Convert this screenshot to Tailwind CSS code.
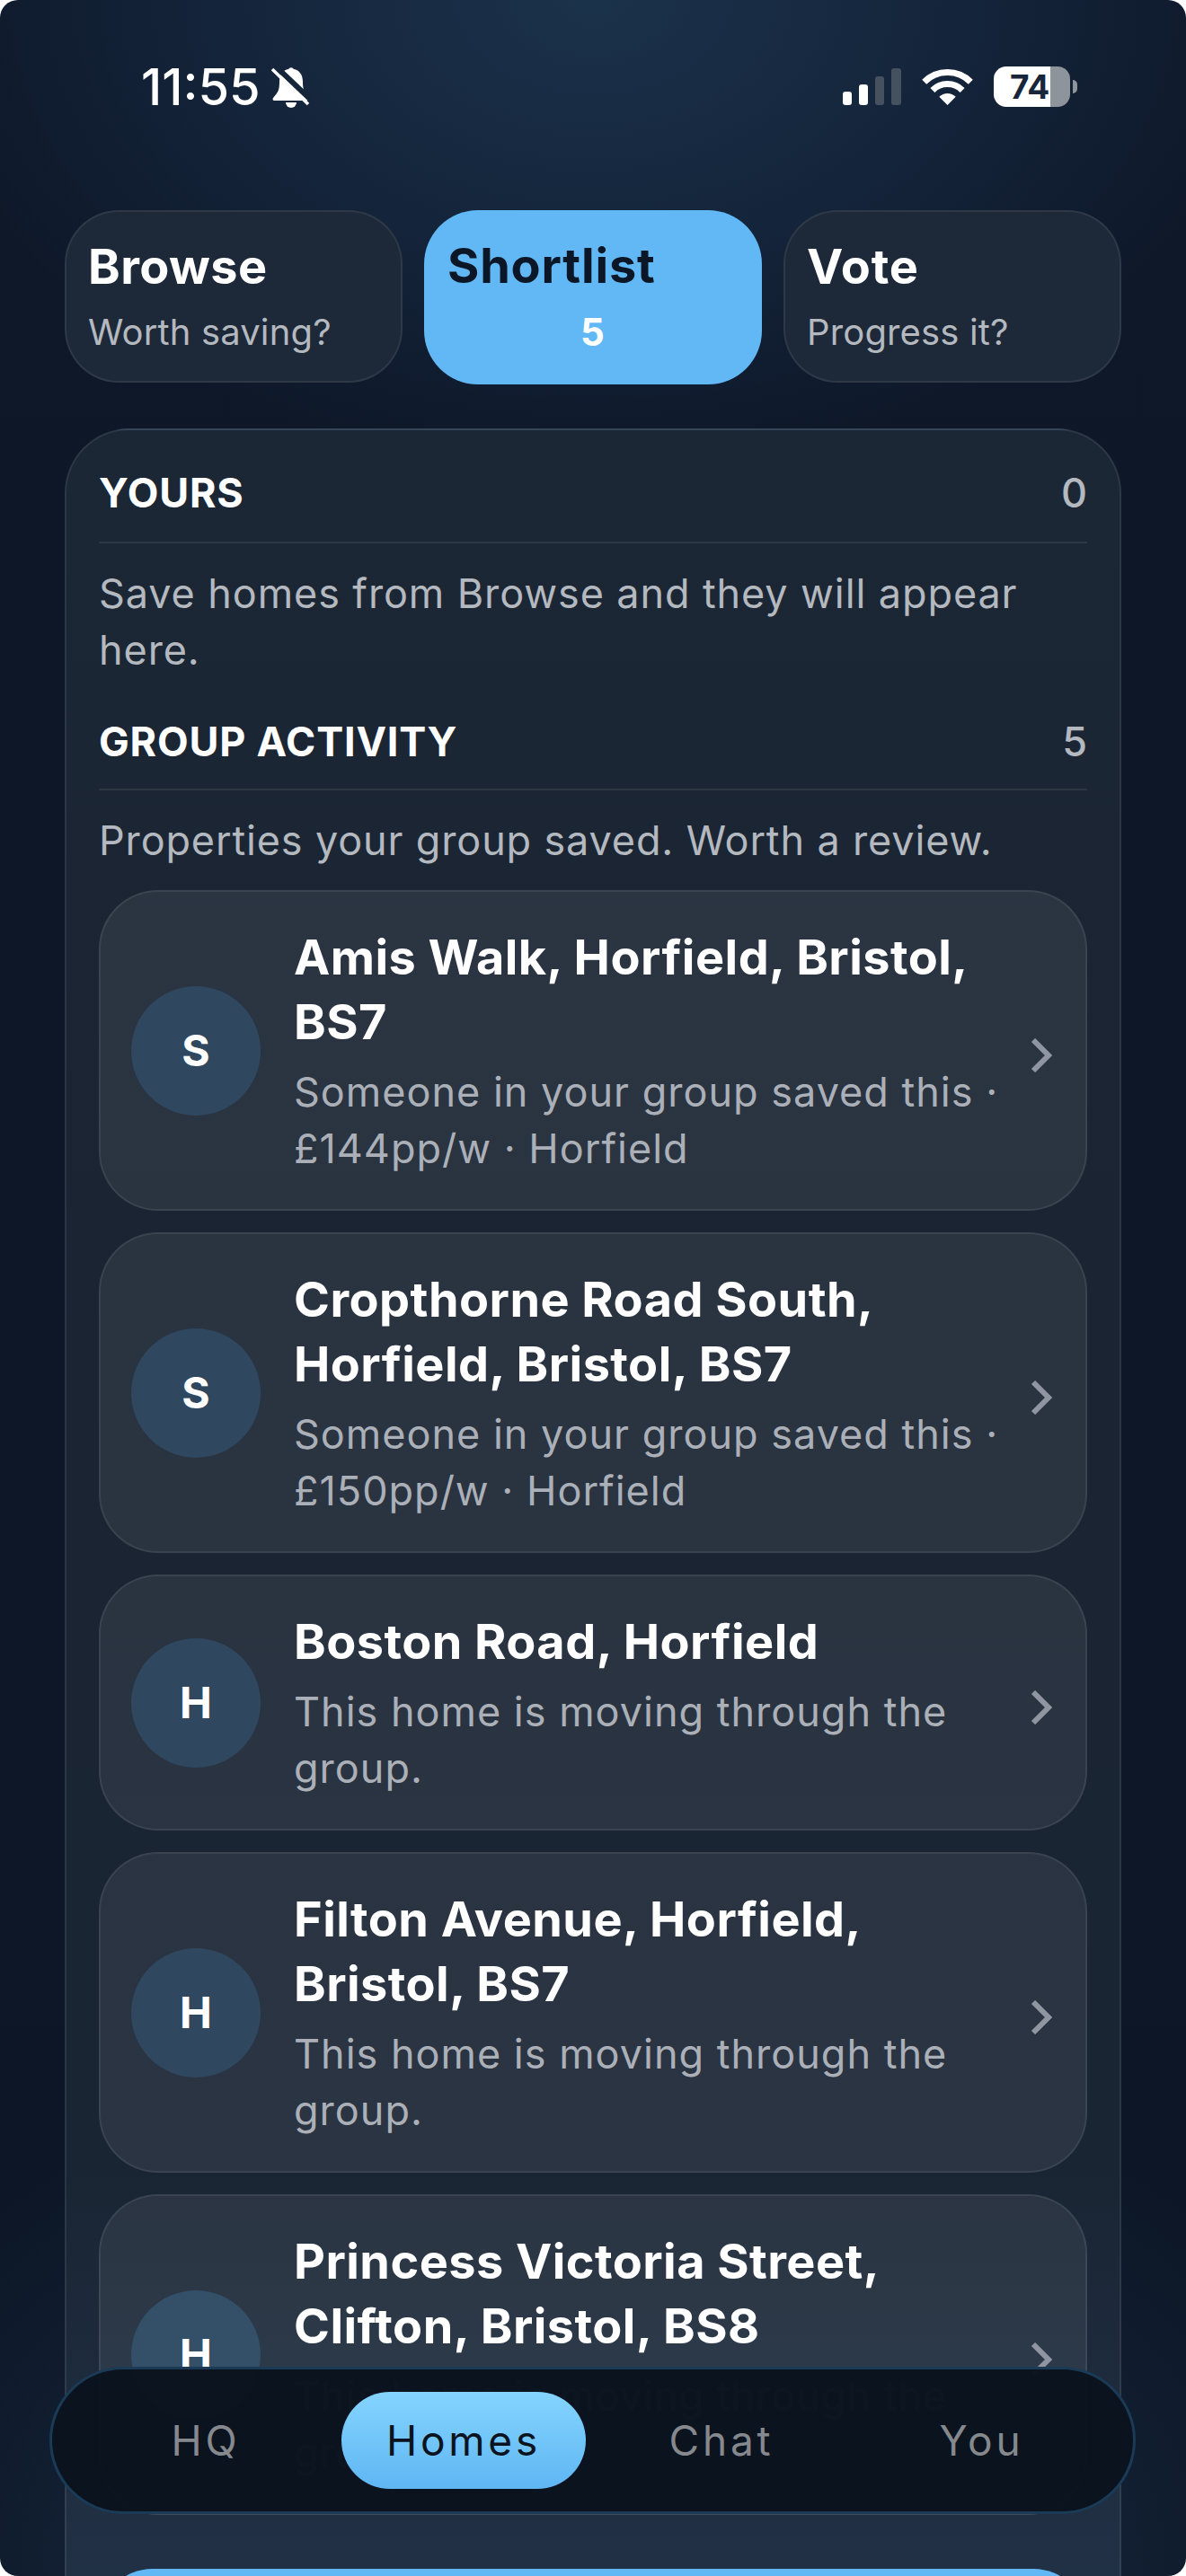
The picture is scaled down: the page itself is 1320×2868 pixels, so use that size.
<!DOCTYPE html>
<html lang="en">

<head>
  <meta charset="UTF-8">
  <meta name="viewport" content="width=device-width, initial-scale=1.0">
  <title>Homes: Shortlist</title>
  <script src="https://cdn.jsdelivr.net/npm/@tailwindcss/browser@4"></script>
</head>

<body class="bg-white font-['Inter',sans-serif]">
  <div class="relative h-[2868px] w-[1320px] overflow-hidden rounded-[20px] bg-[radial-gradient(ellipse_760px_520px_at_50%_0%,#1b324b_0%,#14243a_55%,transparent_100%),radial-gradient(ellipse_900px_600px_at_50%_100%,#1c3048_0%,transparent_100%),linear-gradient(#0e1829,#0c1626)]">

    <!-- Status bar -->
    <div class="flex h-[234px] items-start justify-between pl-[157px] pr-[121px] pt-[74px] text-white">
      <div class="flex items-center gap-[12px]">
        <span class="text-[56px] font-medium leading-[46px]">11:55</span>
        <svg width="44" height="46" viewBox="0 0 44 46" fill="#fff">
          <path d="M19 3a3.5 3.5 0 0 1 6 0c6 1 10 6 10 14c0 7 1 10 3 13l4 5c1 2 0 3-2 3H4c-2 0-3-1-2-3l4-5c2-3 3-6 3-13c0-8 4-13 10-14z" />
          <path d="M16 40h12a6 6 0 0 1-12 0z" />
          <path d="M5 0L45 38" stroke="#16263a" stroke-width="6" />
          <path d="M1 3L41 42" stroke="#fff" stroke-width="3.5" />
        </svg>
      </div>
      <div class="flex items-start">
        <div class="mt-[2px] flex h-[41px] items-end gap-[8px]">
          <span class="h-[15px] w-[10px] rounded-[3px] bg-white"></span>
          <span class="h-[23px] w-[10px] rounded-[3px] bg-white"></span>
          <span class="h-[32px] w-[10px] rounded-[3px] bg-[#46515f]"></span>
          <span class="h-[41px] w-[11px] rounded-[3px] bg-[#46515f]"></span>
        </div>
        <svg class="ml-[23px] mt-[1px]" width="57" height="43" viewBox="0 0 57 43" fill="none" stroke="#fff" stroke-width="7">
          <path d="M2.7 16.2A36.5 36.5 0 0 1 54.3 16.2" />
          <path d="M11.9 25.4A23.5 23.5 0 0 1 45.1 25.4" />
          <path d="M28.5 42L19.3 32.8A13 13 0 0 1 37.7 32.8Z" fill="#fff" stroke="none" />
        </svg>
        <div class="relative ml-[23px] flex h-[45px] w-[85px] overflow-hidden rounded-[14px]">
          <span class="w-[63px] bg-white"></span>
          <span class="flex-1 bg-[#8d949c]"></span>
          <span class="absolute left-[18px] top-0 text-[37px] font-bold leading-[45px] text-[#17263a]">74</span>
        </div>
        <span class="ml-[3px] mt-[15px] h-[15px] w-[5px] rounded-r-full bg-[#8d949c]"></span>
      </div>
    </div>

    <!-- Tabs -->
    <div class="grid grid-cols-3 items-start gap-[24px] px-[72px]">
      <div class="h-[192px] rounded-[60px] border-[2px] border-white/8 bg-[#1d2838] pl-[24px] pt-[25px]">
        <div class="text-[54px] font-bold leading-[72px] tracking-[0.4px] text-white">Browse</div>
        <div class="mt-[5px] text-[40px] leading-[63px] tracking-[0.15px] text-[#b4b8bf]">Worth saving?</div>
      </div>
      <div class="h-[194px] rounded-[60px] bg-[#62b8f4] pl-[26px] pr-[27px] pt-[26px]">
        <div class="text-[54px] font-bold leading-[72px] tracking-[0.8px] text-[#0b1726]">Shortlist</div>
        <div class="mt-[6px] text-center text-[42px] font-bold leading-[63px] text-white">5</div>
      </div>
      <div class="h-[192px] rounded-[60px] border-[2px] border-white/8 bg-[#1d2838] pl-[24px] pt-[25px]">
        <div class="text-[54px] font-bold leading-[72px] tracking-[0.8px] text-white">Vote</div>
        <div class="mt-[5px] text-[40px] leading-[63px] tracking-[0.15px] text-[#b4b8bf]">Progress it?</div>
      </div>
    </div>

    <!-- Panel -->
    <div class="mx-[72px] mt-[49px] rounded-[72px] border-[2px] border-white/8 bg-[linear-gradient(180deg,#1c2736_0%,#1a2432_35%,#1a2534_75%,#24364c_100%)] px-[36px] pb-[60px] pt-[34px]">
      <div class="flex items-center justify-between border-b-[2px] border-white/8 pb-[18px]">
        <h2 class="text-[45px] font-bold leading-[72px] tracking-[0.8px] text-white">YOURS</h2>
        <span class="text-[45px] font-medium leading-[72px] text-[#b4b8bf]">0</span>
      </div>
      <p class="mt-[24px] text-[45px] leading-[63px] tracking-[0.9px] text-[#b4b8bf]">Save homes from Browse and they will appear here.</p>

      <div class="mt-[35px] flex items-center justify-between border-b-[2px] border-white/8 pb-[16px]">
        <h2 class="text-[45px] font-bold leading-[72px] tracking-[0.8px] text-white">GROUP ACTIVITY</h2>
        <span class="text-[45px] font-medium leading-[72px] text-[#b4b8bf]">5</span>
      </div>
      <p class="mt-[24px] text-[45px] leading-[63px] tracking-[0.85px] text-[#b4b8bf]">Properties your group saved. Worth a review.</p>

      <div class="mt-[24px] flex flex-col gap-[24px]">
        <div class="flex items-center rounded-[66px] border-[2px] border-white/8 bg-white/7 px-[34px] pb-[36px] pt-[37px]">
          <div class="flex h-[144px] w-[144px] shrink-0 items-center justify-center rounded-full bg-[#2f4860] text-[48px] font-bold text-white">S</div>
          <div class="ml-[37px] min-w-0 flex-1">
            <h3 class="text-[54px] font-bold leading-[72px] tracking-[0.45px] text-white">Amis Walk, Horfield, Bristol, BS7</h3>
            <p class="mt-[10px] text-[45px] leading-[63px] tracking-[1px] text-[#abb0b8]">Someone in your group saved this · £144pp/w · Horfield</p>
          </div>
          <svg class="ml-[31px] mr-[3px] mt-[10px] shrink-0" width="24" height="38" viewBox="0 0 24 38" fill="none" stroke="#8f96a1" stroke-width="6"><path d="M3 2L20 19L3 36" /></svg>
        </div>

        <div class="flex items-center rounded-[66px] border-[2px] border-white/8 bg-white/7 px-[34px] pb-[36px] pt-[37px]">
          <div class="flex h-[144px] w-[144px] shrink-0 items-center justify-center rounded-full bg-[#2f4860] text-[48px] font-bold text-white">S</div>
          <div class="ml-[37px] min-w-0 flex-1">
            <h3 class="text-[54px] font-bold leading-[72px] tracking-[0.45px] text-white">Cropthorne Road South, Horfield, Bristol, BS7</h3>
            <p class="mt-[10px] text-[45px] leading-[63px] tracking-[1px] text-[#abb0b8]">Someone in your group saved this · £150pp/w · Horfield</p>
          </div>
          <svg class="ml-[31px] mr-[3px] mt-[10px] shrink-0" width="24" height="38" viewBox="0 0 24 38" fill="none" stroke="#8f96a1" stroke-width="6"><path d="M3 2L20 19L3 36" /></svg>
        </div>

        <div class="flex items-center rounded-[66px] border-[2px] border-white/8 bg-white/7 px-[34px] pb-[36px] pt-[37px]">
          <div class="flex h-[144px] w-[144px] shrink-0 items-center justify-center rounded-full bg-[#2f4860] text-[48px] font-bold text-white">H</div>
          <div class="ml-[37px] min-w-0 flex-1">
            <h3 class="text-[54px] font-bold leading-[72px] tracking-[0.45px] text-white">Boston Road, Horfield</h3>
            <p class="mt-[10px] text-[45px] leading-[63px] tracking-[1px] text-[#abb0b8]">This home is moving through the group.</p>
          </div>
          <svg class="ml-[31px] mr-[3px] mt-[10px] shrink-0" width="24" height="38" viewBox="0 0 24 38" fill="none" stroke="#8f96a1" stroke-width="6"><path d="M3 2L20 19L3 36" /></svg>
        </div>

        <div class="flex items-center rounded-[66px] border-[2px] border-white/8 bg-white/7 px-[34px] pb-[36px] pt-[37px]">
          <div class="flex h-[144px] w-[144px] shrink-0 items-center justify-center rounded-full bg-[#2f4860] text-[48px] font-bold text-white">H</div>
          <div class="ml-[37px] min-w-0 flex-1">
            <h3 class="text-[54px] font-bold leading-[72px] tracking-[0.45px] text-white">Filton Avenue, Horfield, Bristol, BS7</h3>
            <p class="mt-[10px] text-[45px] leading-[63px] tracking-[1px] text-[#abb0b8]">This home is moving through the group.</p>
          </div>
          <svg class="ml-[31px] mr-[3px] mt-[10px] shrink-0" width="24" height="38" viewBox="0 0 24 38" fill="none" stroke="#8f96a1" stroke-width="6"><path d="M3 2L20 19L3 36" /></svg>
        </div>

        <div class="flex items-center rounded-[66px] border-[2px] border-white/8 bg-white/7 px-[34px] pb-[36px] pt-[37px]">
          <div class="flex h-[144px] w-[144px] shrink-0 items-center justify-center rounded-full bg-[#345068] text-[48px] font-bold text-white">H</div>
          <div class="ml-[37px] min-w-0 flex-1">
            <h3 class="text-[54px] font-bold leading-[72px] tracking-[0.45px] text-white">Princess Victoria Street, Clifton, Bristol, BS8</h3>
            <p class="mt-[10px] text-[45px] leading-[63px] tracking-[1px] text-[#abb0b8]">This home is moving through the group.</p>
          </div>
          <svg class="ml-[31px] mr-[3px] mt-[10px] shrink-0" width="24" height="38" viewBox="0 0 24 38" fill="none" stroke="#8f96a1" stroke-width="6"><path d="M3 2L20 19L3 36" /></svg>
        </div>
      </div>

      <div class="mt-[60px] h-[150px] rounded-[60px] bg-[#62b8f4]"></div>
    </div>

    <!-- Bottom nav, floats over the list -->
    <nav class="absolute left-[55px] top-[2635px] grid h-[164px] w-[1209px] grid-cols-4 items-center gap-[15px] rounded-full border-[3px] border-[#1b3a55] bg-[#0b131e]/99 px-[35px]">
      <a class="flex h-[108px] items-center justify-center text-[46px] tracking-[3.8px] text-[#85888d]">HQ</a>
      <a class="flex h-[108px] items-center justify-center rounded-full bg-[linear-gradient(180deg,#84d4fe,#5fb6f3)] text-[46px] tracking-[3.8px] text-[#0a1420]">Homes</a>
      <a class="flex h-[108px] items-center justify-center text-[46px] tracking-[3.8px] text-[#85888d]">Chat</a>
      <a class="flex h-[108px] items-center justify-center pl-[5px] text-[46px] tracking-[3.8px] text-[#85888d]">You</a>
    </nav>
  </div>
</body>

</html>
